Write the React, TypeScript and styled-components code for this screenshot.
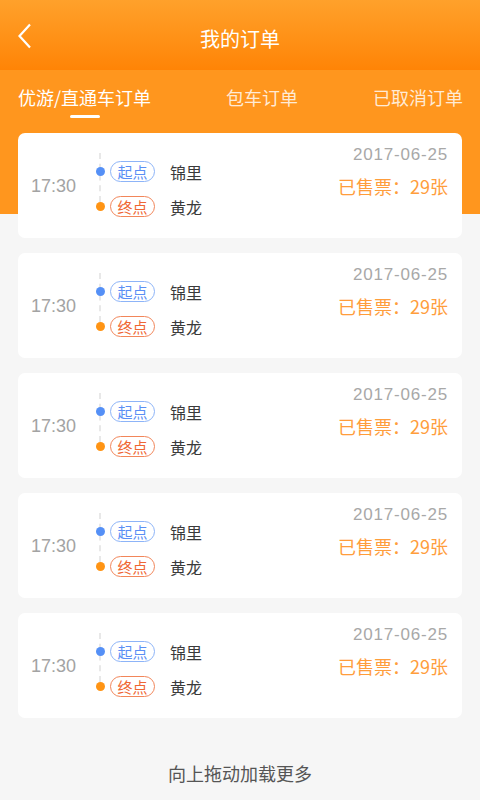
import React from 'react';
import styled, { createGlobalStyle, css } from 'styled-components';

const GlobalStyle = createGlobalStyle`
    html, body {
        margin: 0;
        padding: 0;
        background: #f6f6f6;
    }
    body {
        font-family: "Liberation Sans", "Noto Sans CJK SC", sans-serif;
    }
`;

const Page = styled.div`
    width: 480px;
    min-height: 800px;
    background: #f6f6f6;
    display: flex;
    flex-direction: column;
`;

const Header = styled.header`
    height: 70px;
    background: linear-gradient(to bottom, #ffa12b, #ff8406);
    display: flex;
    align-items: center;
    justify-content: center;
    position: relative;
    padding-top: 6px;
    box-sizing: border-box;
`;

const BackButton = styled.button`
    position: absolute;
    left: 14px;
    top: 22px;
    width: 22px;
    height: 28px;
    padding: 0;
    border: none;
    background: none;
    display: flex;
    align-items: center;
    justify-content: center;
`;

const Title = styled.h1`
    margin: 0;
    font-size: 20px;
    font-weight: normal;
    color: #fff;
    font-family: "Noto Sans CJK SC", sans-serif;
`;

const Tabs = styled.nav`
    height: 63px;
    background: #ff961e;
    display: flex;
    justify-content: space-between;
    align-items: flex-start;
    padding: 16px 17px 0 18px;
    box-sizing: border-box;
`;

const Tab = styled.div<{ active?: boolean }>`
    position: relative;
    font-size: 18px;
    line-height: 22px;
    color: rgba(255, 255, 255, 0.82);
    font-family: "Noto Sans CJK SC", sans-serif;
    ${props =>
      props.active &&
      css`
        color: #fff;
        &::after {
            content: '';
            position: absolute;
            left: 50%;
            bottom: -10px;
            width: 30px;
            height: 3px;
            margin-left: -15px;
            border-radius: 2px;
            background: #fff;
        }
    `}
`;

const List = styled.div`
    background: linear-gradient(to bottom, #ff961e 81px, #f6f6f6 81px);
    padding: 0 18px;
    display: flex;
    flex-direction: column;
    gap: 15px;
`;

const Card = styled.div`
    height: 105px;
    background: #fff;
    border-radius: 7px;
    display: flex;
    padding: 0 14px 0 13px;
    box-sizing: border-box;
`;

const Time = styled.div`
    width: 65px;
    flex-shrink: 0;
    font-size: 18px;
    color: #a3a3a3;
    display: flex;
    align-items: center;
    padding-top: 2px;
`;

const Route = styled.div`
    position: relative;
    padding-top: 21px;
    display: flex;
    flex-direction: column;
    &::before {
        content: '';
        position: absolute;
        left: 3px;
        top: 20px;
        bottom: 36px;
        border-left: 2px dashed #e8e8e8;
    }
`;

const Stop = styled.div`
    height: 35px;
    display: flex;
    align-items: center;
`;

const Dot = styled.span<{ kind: 'start' | 'end' }>`
    position: relative;
    flex-shrink: 0;
    width: 9px;
    height: 9px;
    border-radius: 50%;
    margin-right: 5px;
    background: ${props => (props.kind === 'start' ? '#5590f6' : '#ff9414')};
`;

const Tag = styled.span<{ kind: 'start' | 'end' }>`
    flex-shrink: 0;
    width: 45px;
    height: 21px;
    box-sizing: border-box;
    border-radius: 11px;
    font-size: 15px;
    line-height: 19px;
    text-align: center;
    font-family: "Noto Sans CJK SC", sans-serif;
    margin-right: 15px;
    border: 1px solid ${props => (props.kind === 'start' ? '#8db4f8' : '#f2865a')};
    color: ${props => (props.kind === 'start' ? '#5b8ff5' : '#ef6633')};
`;

const Place = styled.span`
    font-size: 16px;
    color: #3a3a3a;
    font-family: "Noto Sans CJK SC", sans-serif;
`;

const Info = styled.div`
    margin-left: auto;
    padding-top: 11px;
    display: flex;
    flex-direction: column;
    align-items: flex-end;
`;

const DateText = styled.div`
    font-size: 17px;
    line-height: 22px;
    color: #a8a8a8;
    letter-spacing: 0.8px;
`;

const Sold = styled.div`
    margin-top: 7px;
    font-size: 18px;
    line-height: 26px;
    color: #ff9d3c;
    font-family: "Noto Sans CJK SC", sans-serif;
`;

const Footer = styled.div`
    padding: 43px 0 0;
    text-align: center;
    font-size: 18px;
    line-height: 24px;
    color: #555;
    font-family: "Noto Sans CJK SC", sans-serif;
`;

interface Order {
    time: string;
    from: string;
    to: string;
    date: string;
    sold: number;
}

const orders: Order[] = Array.from({ length: 5 }, () => ({
    time: '17:30',
    from: '锦里',
    to: '黄龙',
    date: '2017-06-25',
    sold: 29,
}));

const App = () => {
    return (
        <>
            <GlobalStyle />
            <Page>
                <Header>
                    <BackButton aria-label="back">
                        <svg width="16" height="26" viewBox="0 0 16 26">
                            <path d="M13 1.5 L2.5 13 L13 24.5" fill="none" stroke="#fff" strokeWidth="2.2" />
                        </svg>
                    </BackButton>
                    <Title>我的订单</Title>
                </Header>
                <Tabs>
                    <Tab active>优游/直通车订单</Tab>
                    <Tab>包车订单</Tab>
                    <Tab>已取消订单</Tab>
                </Tabs>
                <List>
                    {orders.map((o, i) => (
                        <Card key={i}>
                            <Time>{o.time}</Time>
                            <Route>
                                <Stop>
                                    <Dot kind="start" />
                                    <Tag kind="start">起点</Tag>
                                    <Place>{o.from}</Place>
                                </Stop>
                                <Stop>
                                    <Dot kind="end" />
                                    <Tag kind="end">终点</Tag>
                                    <Place>{o.to}</Place>
                                </Stop>
                            </Route>
                            <Info>
                                <DateText>{o.date}</DateText>
                                <Sold>已售票：{o.sold}张</Sold>
                            </Info>
                        </Card>
                    ))}
                </List>
                <Footer>向上拖动加载更多</Footer>
            </Page>
        </>
    );
};

export default App;
